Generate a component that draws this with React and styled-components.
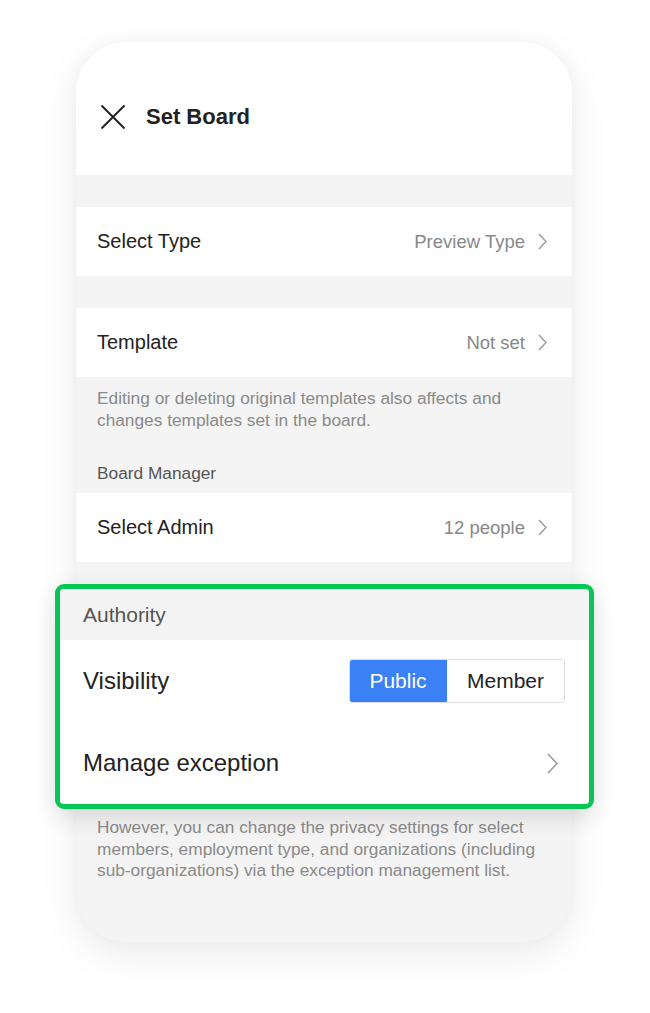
import React from "react";
import styled, { createGlobalStyle } from "styled-components";

const Global = createGlobalStyle`
  html, body { margin: 0; padding: 0; background: #ffffff; }
  body { font-family: "Liberation Sans", Arial, sans-serif; -webkit-font-smoothing: antialiased; }
`;

const Page = styled.div`
  width: 650px;
  height: 1013px;
  padding: 42px 0 0 76px;
  box-sizing: border-box;
`;

const Phone = styled.div`
  width: 496px;
  height: 900px;
  border-radius: 50px;
  background: #f4f4f4;
  box-shadow: 0 12px 40px rgba(0, 0, 0, 0.08), 0 0 18px rgba(0, 0, 0, 0.03);
  display: flex;
  flex-direction: column;
`;

const Header = styled.div`
  height: 133px;
  background: #fff;
  border-radius: 50px 50px 0 0;
  display: flex;
  align-items: center;
  padding: 16px 0 0 24px;
  box-sizing: border-box;
  gap: 20px;
`;

const Title = styled.h1`
  margin: 0;
  font-size: 22px;
  font-weight: 700;
  color: #222;
`;

const Gap = styled.div`
  height: ${(p) => p.$h}px;
`;

const Row = styled.div`
  height: ${(p) => (p.$big ? 82 : 69)}px;
  background: #fff;
  display: flex;
  align-items: center;
  padding: ${(p) => (p.$big ? "0 31px 0 23px" : "0 25px 0 21px")};
  box-sizing: border-box;
`;

const Label = styled.span`
  flex: 1;
  font-size: ${(p) => (p.$big ? 24 : 20)}px;
  color: #222;
`;

const Value = styled.span`
  font-size: 18.5px;
  color: #888;
  margin-right: 13px;
`;

const Note = styled.p`
  margin: 0;
  padding: ${(p) => p.$pad};
  font-size: 17.3px;
  line-height: ${(p) => p.$lh || 22}px;
  color: #8a8a8a;
`;

const SectionTitle = styled.div`
  font-size: ${(p) => (p.$big ? 21 : 17.3)}px;
  line-height: 22px;
  color: #555;
  padding: ${(p) => p.$pad};
  background: #f4f4f4;
`;

const Callout = styled.div`
  margin: 0 -22px 0 -21px;
  border: 5px solid #06c755;
  border-radius: 9px;
  background: #fff;
  overflow: hidden;
  box-shadow: 0 8px 24px rgba(0, 0, 0, 0.12);
  position: relative;
`;

const Segments = styled.div`
  display: flex;
  height: 44px;
  margin-right: -7px;
  border-radius: 3px;
  overflow: hidden;
  border: 1px solid #dedede;
  box-sizing: border-box;
`;

const Segment = styled.div`
  display: flex;
  align-items: center;
  justify-content: center;
  width: ${(p) => p.$w}px;
  font-size: 21px;
  background: ${(p) => (p.$active ? "#3b80f5" : "#fff")};
  color: ${(p) => (p.$active ? "#fff" : "#222")};
  margin: ${(p) => (p.$active ? "-1px 0 -1px -1px" : "0")};
`;

const Close = () => (
  <svg width="26" height="26" viewBox="0 0 26 26">
    <path d="M1.5 1.5 L24.5 24.5 M24.5 1.5 L1.5 24.5" stroke="#222" strokeWidth="2" fill="none" />
  </svg>
);

const Chevron = ({ big }) => (
  <svg width={big ? 11 : 9} height={big ? 21 : 17} viewBox={big ? "0 0 11 21" : "0 0 9 17"}>
    <polyline
      points={big ? "1,1 10,10.5 1,20" : "1,1 8,8.5 1,16"}
      stroke="#999"
      strokeWidth={big ? 1.5 : 1.4}
      fill="none"
    />
  </svg>
);

export default function App() {
  return (
    <>
      <Global />
      <Page>
        <Phone>
          <Header>
            <Close />
            <Title>Set Board</Title>
          </Header>
          <Gap $h={32} />
          <Row>
            <Label>Select Type</Label>
            <Value>Preview Type</Value>
            <Chevron />
          </Row>
          <Gap $h={32} />
          <Row>
            <Label>Template</Label>
            <Value>Not set</Value>
            <Chevron />
          </Row>
          <Note $pad="10px 40px 0 21px">
            Editing or deleting original templates also affects and changes templates set in the board.
          </Note>
          <SectionTitle $pad="31px 21px 9px">Board Manager</SectionTitle>
          <Row>
            <Label>Select Admin</Label>
            <Value>12 people</Value>
            <Chevron />
          </Row>
          <Gap $h={22} />
          <Callout>
            <SectionTitle $big $pad="15px 23px 14px">Authority</SectionTitle>
            <Row $big>
              <Label $big>Visibility</Label>
              <Segments>
                <Segment $active $w={98}>Public</Segment>
                <Segment $w={117}>Member</Segment>
              </Segments>
            </Row>
            <Row $big>
              <Label $big>Manage exception</Label>
              <Chevron big />
            </Row>
          </Callout>
          <Note $pad="8px 25px 0 21px" $lh={21.5}>
            However, you can change the privacy settings for select members, employment type, and organizations (including sub-organizations) via the exception management list.
          </Note>
        </Phone>
      </Page>
    </>
  );
}
